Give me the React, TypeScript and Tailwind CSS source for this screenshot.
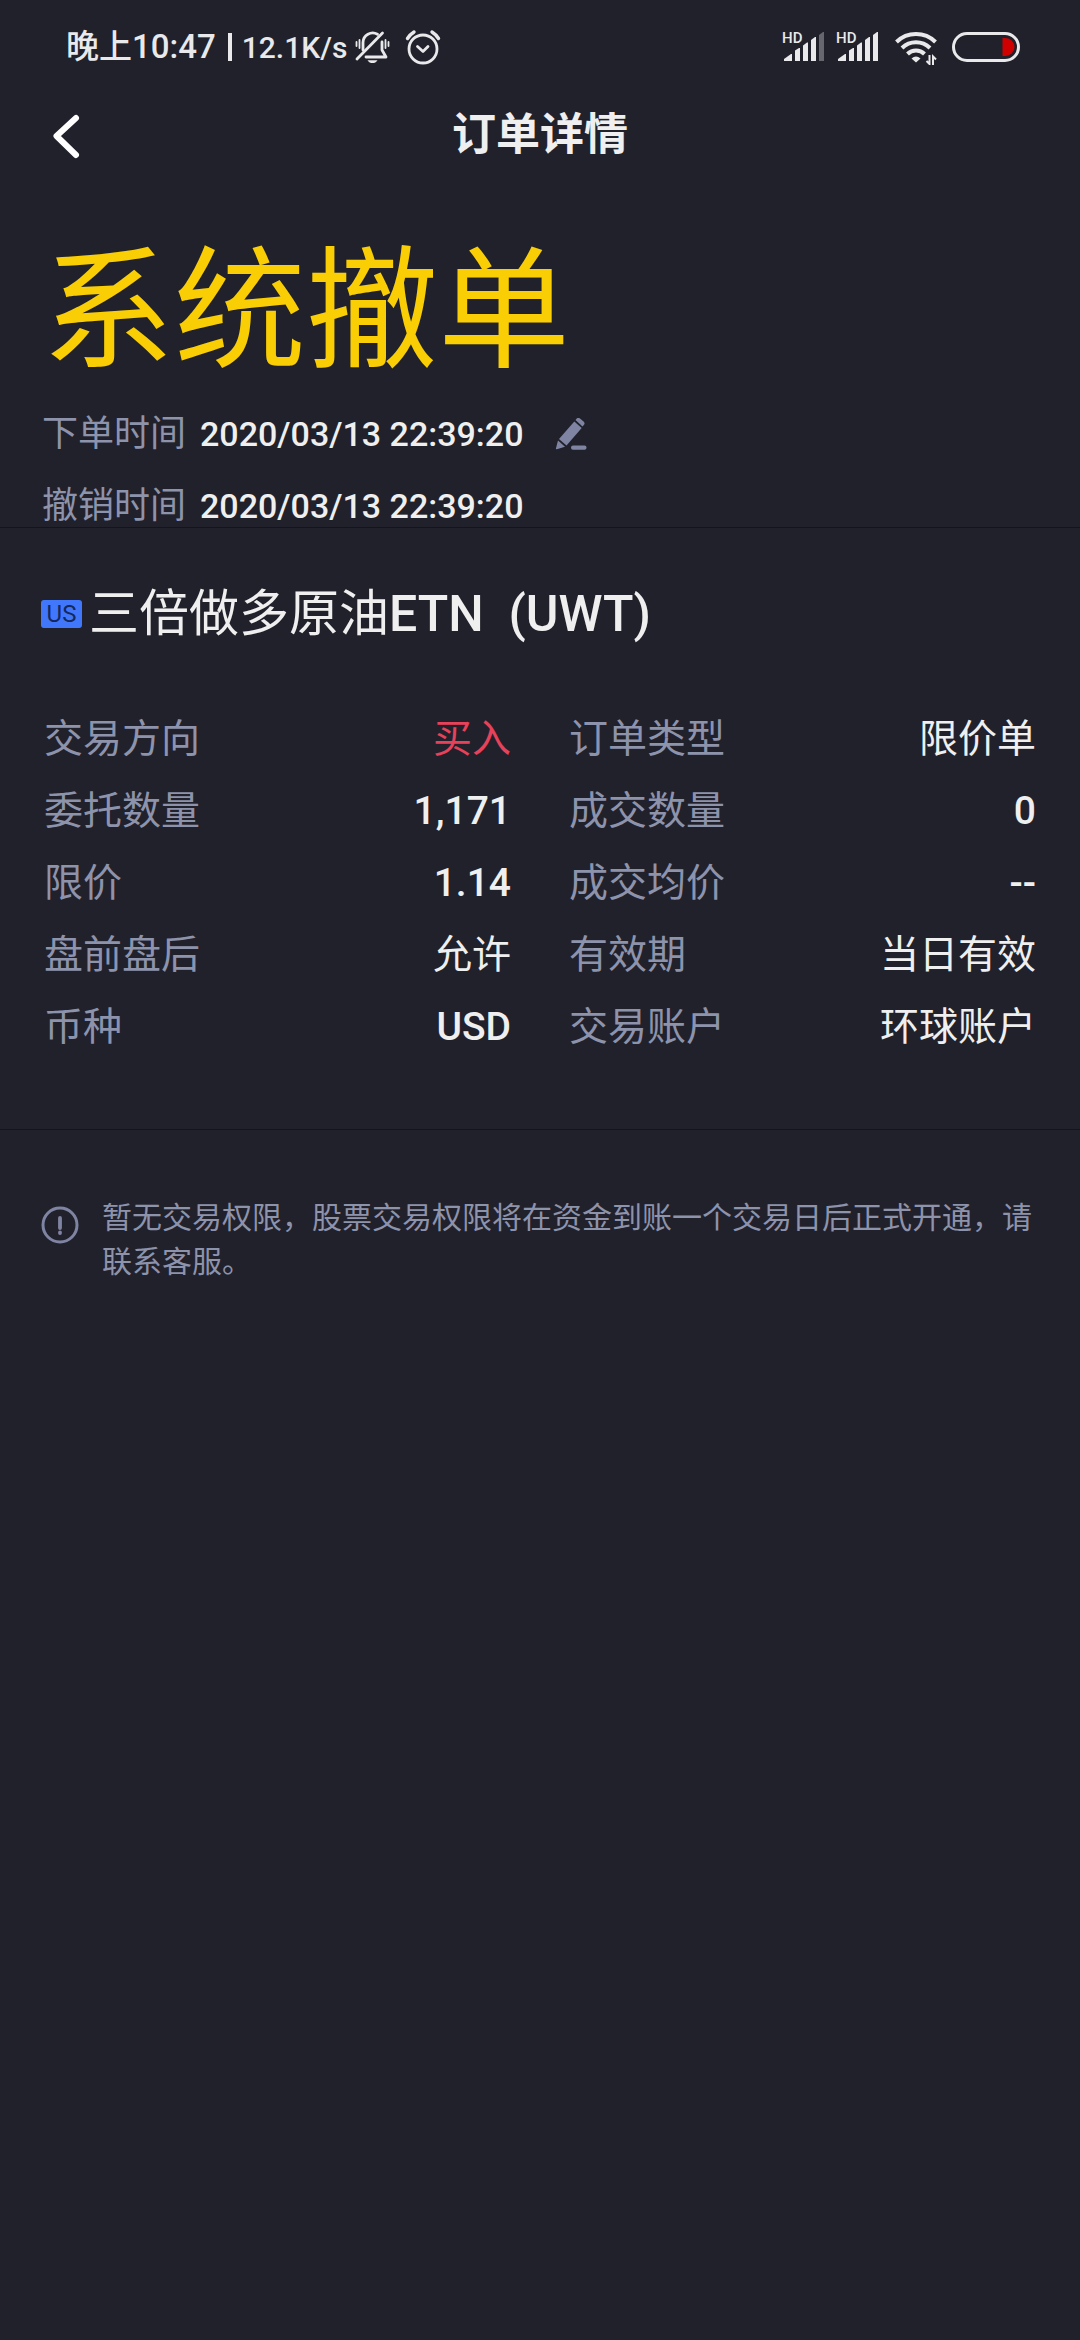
import React from 'react';

const orderFields = [
  { label: '交易方向', value: '买入', color: 'text-[#e8415a]' },
  { label: '订单类型', value: '限价单' },
  { label: '委托数量', value: '1,171' },
  { label: '成交数量', value: '0' },
  { label: '限价', value: '1.14' },
  { label: '成交均价', value: '--' },
  { label: '盘前盘后', value: '允许' },
  { label: '有效期', value: '当日有效' },
  { label: '币种', value: 'USD' },
  { label: '交易账户', value: '环球账户' }
];

const MutedBell = () => (
  <svg className="w-9 h-9" viewBox="0 0 36 36" fill="none" stroke="currentColor" strokeWidth="2.8" strokeLinecap="round">
    <path d="M8 21v-7.5a9.7 9.7 0 0 1 14.500-8.200" />
    <path d="M27 13v8l4 7H11" strokeLinejoin="round" />
    <path d="M27.500 4 2 30" />
    <path d="M12.500 31.200h10c-1.200 2-3 2.800-5 2.800s-3.800-.8-5-2.800z" fill="currentColor" stroke="none" />
    <path d="M1.500 13v4M4.500 11v8M30.500 11v8M33.500 13v4" strokeWidth="1.800" />
  </svg>
);

const AlarmClock = () => (
  <svg className="w-9 h-9" viewBox="0 0 36 36" fill="none" stroke="currentColor" strokeWidth="2.8" strokeLinecap="round" strokeLinejoin="round">
    <circle cx="18" cy="20" r="14" />
    <path d="m12.500 17.500 5.500 5 5-5" />
    <path d="M2.500 9.500q2.500-4 6.500-6.500M33.500 9.500q-2.500-4-6.500-6.500" strokeWidth="3.400" />
  </svg>
);

const Signal = ({ full }: { full?: boolean }) => (
  <svg className="w-11 h-9 overflow-visible" viewBox="0 0 44 36" fill="currentColor">
    <text x="0" y="14" fontSize="15" fontWeight="500">HD</text>
    <path d="M2 32v-2l7-5h1v7z" />
    <path d="M13 32V21.500l4-2.500h1v13z" />
    <path d="M21 32V16.500l4-3h1V32z" />
    <path d="M29 32V11l4-3h1v24z" />
    <path d="M37 32V6l4-3h1v29z" opacity={full ? 1 : 0.35} />
  </svg>
);

const Wifi = () => (
  <svg className="w-11 h-9" viewBox="0 0 44 36" fill="none" stroke="currentColor" strokeWidth="4">
    <path d="M2.500 13a28 28 0 0 1 39 0" />
    <path d="M8 19a20 20 0 0 1 28 0" />
    <path d="M13.500 25a12 12 0 0 1 17 0" />
    <path d="M17.500 29.500q4.500-4 9 0L22 33.500z" fill="currentColor" stroke="none" />
    <path d="M35.500 26v9l-3-3M39 36v-8.500l3 3" strokeWidth="2" />
  </svg>
);

const Battery = () => (
  <svg className="w-[68px] h-[30px]" viewBox="0 0 68 30" fill="none">
    <rect x="1.500" y="1.500" width="65" height="27" rx="13.500" stroke="currentColor" strokeWidth="3" />
    <path d="M50.500 6h3a9 9 0 0 1 0 18h-3z" fill="#cf0000" />
  </svg>
);

const App = () => {
  return (
    <div
      lang="zh-CN"
      className="min-h-screen bg-[#21212b] text-[#efefef] font-['Roboto','Noto_Sans_CJK_SC',sans-serif]"
    >
      {/* Status Bar */}
      <div className="flex items-center justify-between h-[94px] pl-[66px] pr-[60px] text-[#e9e9eb]">
        <div className="flex items-center font-medium">
          <span className="text-[33px]">晚上10:47</span>
          <span className="w-1 h-7 ml-3 mr-2.5 bg-current"></span>
          <span className="text-[30px] mr-2">12.1K/s</span>
          <MutedBell />
          <span className="w-3.5"></span>
          <AlarmClock />
        </div>
        <div className="flex items-center">
          <Signal />
          <span className="w-2.5"></span>
          <Signal full />
          <span className="w-3.5"></span>
          <Wifi />
          <span className="w-3.5"></span>
          <Battery />
        </div>
      </div>

      {/* Header */}
      <header className="grid grid-cols-3 items-center h-[82px] px-11">
        <button type="button" aria-label="返回" className="w-12 h-14">
          <svg className="w-11 h-14" viewBox="0 0 44 56" fill="none" stroke="#fff" strokeWidth="6" strokeLinecap="round" strokeLinejoin="round">
            <path d="M32 11 12.500 29 32 48" />
          </svg>
        </button>
        <h1 className="text-center text-[44px] font-bold">订单详情</h1>
      </header>

      {/* Order Status */}
      <section className="px-[42px] pt-[50px] border-b border-[#14141c]">
        <h2 className="text-[132px] leading-[172px] text-[#f9ce05]">系统撤单</h2>
        <div className="flex flex-col gap-[30px] pt-[15px] text-[36px] leading-[42px]">
          <div className="flex items-center">
            <span className="text-[#8e93ac] mr-3.5">下单时间</span>
            <span className="text-[34px] font-medium">2020/03/13 22:39:20</span>
            <button type="button" aria-label="编辑" className="ml-8">
              <svg className="w-8 h-8" viewBox="0 0 32 32" fill="#7f84a3">
                <path d="m20.500 2 1-1.200a2.500 2.500 0 0 1 3.500-.2l3.600 3a2.500 2.500 0 0 1 .2 3.500l-1.300 1.400z" />
                <path d="m19.300 3.500 7.400 6.600L11.500 27.500l-7.500-6.500z" />
                <path d="m3 22.500 7 6.200-8.200 2.600q-1 .2-.9-.8z" />
                <rect x="16" y="27.500" width="15.500" height="4.200" rx="2" />
              </svg>
            </button>
          </div>
          <div className="flex items-center">
            <span className="text-[#8e93ac] mr-3.5">撤销时间</span>
            <span className="text-[34px] font-medium">2020/03/13 22:39:20</span>
          </div>
        </div>
      </section>

      {/* Order Details */}
      <section className="pt-[50px] pb-[66px] border-b border-[#14141c]">
        <h3 className="flex items-center px-[41px] text-[50px] leading-[72px]">
          <span className="flex items-center justify-center w-[41px] h-7 mr-[7px] rounded-[3px] bg-[#4178fb] text-[#14285c] text-[24px]">US</span>
          <span>三倍做多原油<span className="font-medium">ETN&nbsp; (UWT)</span></span>
        </h3>
        <dl className="grid grid-cols-2 gap-x-[58px] px-11 pt-[53px] text-[39px] leading-[72px]">
          {orderFields.map((field) => (
            <div key={field.label} className="flex justify-between">
              <dt className="text-[#8e93ac]">{field.label}</dt>
              <dd className={/^[\x00-\x7f]+$/.test(field.value) ? 'font-medium' : field.color}>{field.value}</dd>
            </div>
          ))}
        </dl>
      </section>

      {/* Notice */}
      <section className="flex items-start pl-[41px] pr-11 pt-[66px]">
        <svg className="w-[38px] h-[38px] mt-2.5 mr-[23px] shrink-0" viewBox="0 0 38 38" fill="none" stroke="#7f84a3">
          <circle cx="19" cy="19" r="17" strokeWidth="3" />
          <path d="M19 12v10M19 26.500v.5" strokeWidth="3.800" strokeLinecap="round" />
        </svg>
        <p className="text-[30px] leading-[44px] text-[#8e93ac]">
          暂无交易权限，股票交易权限将在资金到账一个交易日后正式开通，请联系客服。
        </p>
      </section>
    </div>
  );
};

export default App;
